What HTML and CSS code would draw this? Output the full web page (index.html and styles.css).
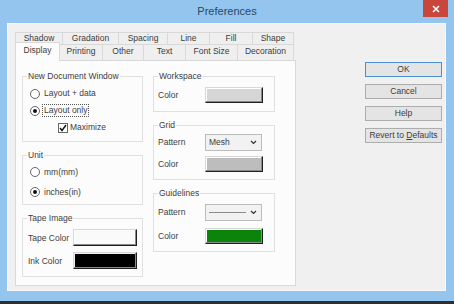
FILE: index.html
```html
<!DOCTYPE html>
<html lang="en">
<head>
  <meta charset="UTF-8" />
  <title>Preferences</title>
  <link rel="stylesheet" href="styles.css">
</head>
<body>

<div class="window">
  <div class="titlebar">
    <span class="title">Preferences</span>
    <span class="close">
      <svg width="8" height="8" viewBox="0 0 8 8"><path d="M1 1 L7 7 M7 1 L1 7" stroke="#fff" stroke-width="1.6" fill="none"/></svg>
    </span>
  </div>

  <div class="client">
    <div class="tabs-area">
      <div class="tab-row back">
        <span class="tab w47">Shadow</span>
        <span class="tab w56">Gradation</span>
        <span class="tab w49">Spacing</span>
        <span class="tab w42">Line</span>
        <span class="tab w43">Fill</span>
        <span class="tab w41">Shape</span>
      </div>
      <div class="tab-row front">
        <span class="tab w44 active">Display</span>
        <span class="tab w43">Printing</span>
        <span class="tab w41">Other</span>
        <span class="tab w42">Text</span>
        <span class="tab w52">Font Size</span>
        <span class="tab w56">Decoration</span>
      </div>

      <div class="panel">
        <div class="col">
          <fieldset class="grp grp-ndw">
            <legend>New Document Window</legend>
            <div class="opt opt17"><span class="radio"></span><span class="lbl">Layout + data</span></div>
            <div class="opt opt17"><span class="radio on"></span><span class="lbl focus">Layout only</span></div>
            <div class="opt opt17 indent">
              <span class="check"><svg width="8" height="8" viewBox="0 0 8 8"><polyline points="1,4 3,6.5 7,1" fill="none" stroke="#111" stroke-width="1.4"/></svg></span>
              <span class="lbl tight">Maximize</span>
            </div>
          </fieldset>

          <fieldset class="grp grp-unit">
            <legend>Unit</legend>
            <div class="opt opt20"><span class="radio"></span><span class="lbl">mm(mm)</span></div>
            <div class="opt opt20"><span class="radio on"></span><span class="lbl">inches(in)</span></div>
          </fieldset>

          <fieldset class="grp grp-tape">
            <legend>Tape Image</legend>
            <div class="opt opt23"><span class="field-lbl short">Tape Color</span><span class="swatch wide white"></span></div>
            <div class="opt opt23"><span class="field-lbl short">Ink Color</span><span class="swatch wide black"></span></div>
          </fieldset>
        </div>

        <div class="col">
          <fieldset class="grp grp-work">
            <legend>Workspace</legend>
            <div class="opt opt22"><span class="field-lbl">Color</span><span class="swatch light"></span></div>
          </fieldset>

          <fieldset class="grp grp-grid">
            <legend>Grid</legend>
            <div class="opt opt22">
              <span class="field-lbl">Pattern</span>
              <span class="select"><span class="sel-text">Mesh</span>
                <svg width="7" height="5" viewBox="0 0 7 5"><polyline points="1,1 3.5,3.5 6,1" fill="none" stroke="#333" stroke-width="1.2"/></svg>
              </span>
            </div>
            <div class="opt opt22"><span class="field-lbl">Color</span><span class="swatch mid"></span></div>
          </fieldset>

          <fieldset class="grp grp-guide">
            <legend>Guidelines</legend>
            <div class="opt opt24">
              <span class="field-lbl">Pattern</span>
              <span class="select"><span class="sel-line"></span>
                <svg width="7" height="5" viewBox="0 0 7 5"><polyline points="1,1 3.5,3.5 6,1" fill="none" stroke="#333" stroke-width="1.2"/></svg>
              </span>
            </div>
            <div class="opt opt24"><span class="field-lbl">Color</span><span class="swatch green"></span></div>
          </fieldset>
        </div>
      </div>
    </div>

    <div class="buttons">
      <button class="btn default">OK</button>
      <button class="btn">Cancel</button>
      <button class="btn">Help</button>
      <button class="btn">Revert to <u>D</u>efaults</button>
    </div>
  </div>
</div>

</body>
</html>
```

FILE: styles.css
```css
* {
  box-sizing: border-box;
}
body {
  margin: 0;
  font-family: "Liberation Sans", Arial, sans-serif;
  font-size: 8.5px;
  color: #3c3c3c;
  background: #2e2e2e;
}
.window {
  width: 454px;
  height: 301px;
  background: #93c5ef;
  display: flex;
  flex-direction: column;
}
.titlebar {
  height: 23px;
  display: flex;
  align-items: flex-start;
  padding-left: 31px;
}
.title {
  flex: 1;
  text-align: center;
  font-size: 11px;
  line-height: 22px;
  color: #2a4866;
}
.close {
  width: 25px;
  height: 17px;
  margin-right: 6px;
  background: #c9463d;
  display: flex;
  align-items: center;
  justify-content: center;
}

.client {
  height: 268px;
  margin: 0 8px 0 7px;
  background: #f0f0f0;
  border: 1px solid #f8f8f8;
  display: flex;
  padding: 8px 0 0 7px;
}
.tabs-area {
  width: 281px;
}
.tab-row {
  display: flex;
}
.tab-row.back {
  height: 12px;
}
.tab-row.front {
  height: 16px;
  align-items: flex-end;
}
.tab {
  height: 100%;
  border: 1px solid #d9d9d9;
  border-bottom: none;
  margin-right: -1px;
  background: #efefef;
  text-align: center;
  line-height: 12px;
}
.tab-row.back .tab {
  line-height: 11px;
}
.tab.active {
  position: relative;
  z-index: 1;
  height: 19px;
  margin-bottom: -1px;
  background: #fcfcfc;
  line-height: 15px;
}
.w41 { width: 42px; }
.w42 { width: 43px; }
.w43 { width: 44px; }
.w44 { width: 45px; }
.w47 { width: 48px; }
.w49 { width: 50px; }
.w52 { width: 53px; }
.w56 { width: 57px; }

.panel {
  height: 226px;
  border: 1px solid #d9d9d9;
  background: #fcfcfc;
  display: flex;
  gap: 10px;
  padding: 10px 0 0 6px;
}
.col {
  display: flex;
  flex-direction: column;
}
.col:first-child {
  width: 121px;
}
.col:last-child {
  width: 122px;
}

.grp {
  margin: 0 0 8px;
  border: 1px solid #e0e0e0;
  padding: 0 4px;
  min-width: 0;
}
.grp legend {
  padding: 0 1px;
  line-height: 10px;
}
.grp-ndw { padding-top: 4px; padding-bottom: 5px; }
.grp-unit { padding-top: 2px; padding-bottom: 2px; }
.grp-tape { padding-top: 3px; padding-bottom: 4px; }
.grp-work { padding-top: 3px; padding-bottom: 5px; }
.grp-grid { padding-top: 1px; padding-bottom: 4px; }
.grp-guide { padding-top: 2px; padding-bottom: 3px; }

.opt {
  display: flex;
  align-items: center;
}
.opt17 { height: 17px; }
.opt20 { height: 20px; }
.opt22 { height: 22px; }
.opt23 { height: 23px; }
.opt24 { height: 24px; }

.radio {
  width: 10px;
  height: 10px;
  margin-left: 3px;
  border: 1px solid #666;
  border-radius: 50%;
  background: #fff;
  display: flex;
  align-items: center;
  justify-content: center;
}
.radio.on::after {
  content: "";
  width: 4px;
  height: 4px;
  border-radius: 50%;
  background: #111;
}
.lbl {
  margin-left: 3px;
  padding: 0 1px;
  line-height: 11px;
}
.lbl.tight {
  margin-left: 1px;
}
.lbl.focus {
  outline: 1px dotted #555;
}
.indent {
  padding-left: 31px;
}
.check {
  width: 10px;
  height: 10px;
  border: 1px solid #666;
  background: #fff;
  display: flex;
  align-items: center;
  justify-content: center;
}

.field-lbl {
  width: 47px;
}
.field-lbl.short {
  width: 46px;
  padding-left: 1px;
}
.swatch {
  width: 58px;
  height: 16px;
  border: 1px solid;
  border-color: #d8d8d8 #1e1e1e #1e1e1e #d8d8d8;
  box-shadow: inset -1px -1px 0 #8a8a8a, inset 1px 1px 0 #fff;
}
.swatch.wide {
  width: 64px;
  height: 17px;
}
.swatch.white { background: #fafafa; }
.swatch.black { background: #000; box-shadow: inset -1px -1px 0 #8a8a8a, inset 1px 1px 0 #eee; }
.swatch.light { background: #d6d6d6; }
.swatch.mid { background: #bdbdbd; }
.swatch.green { background: #0a840a; }

.select {
  width: 57px;
  height: 17px;
  border: 1px solid #bcbcbc;
  background: #f2f2f2;
  display: flex;
  align-items: center;
  padding: 0 4px 0 3px;
  gap: 4px;
}
.sel-text {
  flex: 1;
}
.sel-line {
  flex: 1;
  height: 1px;
  background: #8c8c8c;
}

.buttons {
  margin-left: 69px;
  margin-top: 30px;
  display: flex;
  flex-direction: column;
  gap: 7px;
}
.btn {
  width: 77px;
  height: 15px;
  padding: 0;
  border: 1px solid #adadad;
  background: #e4e4e4;
  font-family: "Liberation Sans", Arial, sans-serif;
  font-size: 8.5px;
  color: #3c3c3c;
  line-height: 13px;
  text-align: center;
}
.btn.default {
  border-color: #4a8fcf;
}
```
